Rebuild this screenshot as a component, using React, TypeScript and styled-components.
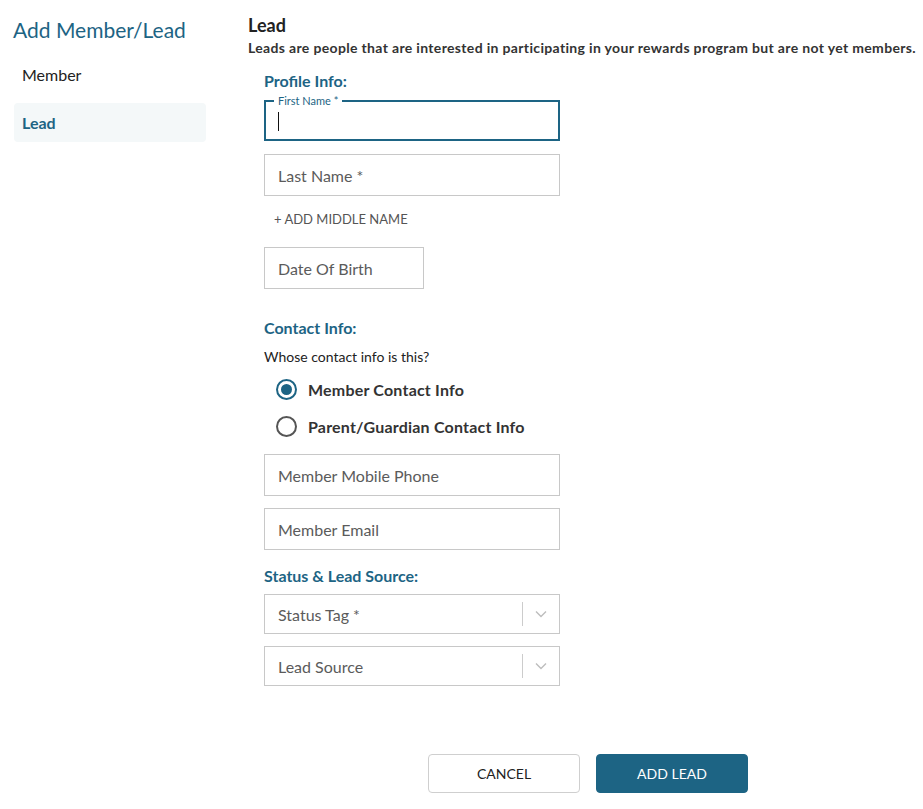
import React from 'react';
import styled, { createGlobalStyle } from 'styled-components';

const TEAL = '#1d6484';

const GlobalStyle = createGlobalStyle`
    body {
        margin: 0;
        background: #ffffff;
        font-family: Lato, 'Liberation Sans', sans-serif;
        color: #222;
    }
    * {
        box-sizing: border-box;
    }
`;

const Page = styled.div`
    display: flex;
    width: 923px;
    min-height: 809px;
`;

/**
 * 왼쪽 메뉴
 */
const Sidebar = styled.nav`
    width: 192px;
    margin-left: 14px;
    padding-top: 17px;
    display: flex;
    flex-direction: column;
`;

const SideTitle = styled.h2`
    margin: 0 0 12px -1px;
    font-size: 21px;
    line-height: 26px;
    font-weight: 400;
    color: ${TEAL};
`;

const SideItem = styled.a<{ $active?: boolean }>`
    display: flex;
    align-items: center;
    height: 39px;
    margin-bottom: 9px;
    padding: 0 8px;
    border-radius: 4px;
    font-size: 16px;
    font-weight: ${(p) => (p.$active ? 700 : 400)};
    color: ${(p) => (p.$active ? TEAL : '#222')};
    background: ${(p) => (p.$active ? '#f4f8f9' : 'transparent')};
    cursor: pointer;
`;

/**
 * 본문
 */
const Main = styled.main`
    flex: 1;
    margin-left: 42px;
    padding-top: 14px;
    display: flex;
    flex-direction: column;
`;

const Title = styled.h1`
    margin: 0;
    font-size: 18px;
    line-height: 22px;
    font-weight: 700;
    color: #222;
`;

const Subtitle = styled.p`
    margin: 3px 0 0;
    font-size: 14px;
    line-height: 18px;
    letter-spacing: 0.34px;
    font-weight: 700;
    color: #333;
    white-space: nowrap;
`;

const Form = styled.form`
    margin-left: 16px;
    width: 296px;
    display: flex;
    flex-direction: column;
`;

const SectionTitle = styled.h3<{ $top: number }>`
    margin: ${(p) => p.$top}px 0 0;
    font-size: 16px;
    line-height: 20px;
    font-weight: 700;
    color: ${TEAL};
`;

const Field = styled.input<{ $width?: number; $top: number }>`
    display: block;
    width: ${(p) => p.$width || 296}px;
    height: 42px;
    margin-top: ${(p) => p.$top}px;
    padding: 0 13px;
    border: 1px solid #c8c8c8;
    border-radius: 0;
    font-family: Lato, 'Liberation Sans', sans-serif;
    font-size: 16px;
    color: #333;
    outline: none;
    &::placeholder {
        color: #5b5b5b;
    }
`;

const FocusedField = styled.div`
    position: relative;
    display: flex;
    align-items: center;
    width: 296px;
    height: 41px;
    margin-top: 9px;
    padding: 0 12px;
    border: 2px solid ${TEAL};
`;

const FloatLabel = styled.span`
    position: absolute;
    top: -8px;
    left: 8px;
    padding: 0 4px;
    background: #fff;
    font-size: 11px;
    line-height: 13px;
    color: ${TEAL};
`;

const Caret = styled.span`
    display: block;
    width: 1px;
    height: 19px;
    margin-top: 2px;
    background: #111;
`;

const AddLink = styled.button`
    align-self: flex-start;
    height: 24px;
    margin: 11px 0 16px 10px;
    padding: 0;
    border: none;
    background: none;
    font-family: Lato, 'Liberation Sans', sans-serif;
    font-size: 13px;
    color: #555;
    cursor: pointer;
`;

const Question = styled.p`
    margin: 9px 0 0;
    font-size: 14px;
    line-height: 20px;
    color: #222;
`;

const RadioRow = styled.label`
    display: flex;
    align-items: center;
    height: 29px;
    margin-top: 8px;
    padding-left: 12px;
    font-size: 16px;
    font-weight: 700;
    letter-spacing: 0.2px;
    color: #333;
    cursor: pointer;
`;

const RadioCircle = styled.span<{ $checked?: boolean }>`
    display: flex;
    align-items: center;
    justify-content: center;
    width: 21px;
    height: 21px;
    margin-right: 11px;
    border-radius: 50%;
    border: 2px solid ${(p) => (p.$checked ? TEAL : '#555')};
    &::after {
        content: '';
        display: ${(p) => (p.$checked ? 'block' : 'none')};
        width: 11px;
        height: 11px;
        border-radius: 50%;
        background: ${TEAL};
    }
`;

const Select = styled.div<{ $top: number }>`
    display: flex;
    align-items: center;
    width: 296px;
    height: 40px;
    margin-top: ${(p) => p.$top}px;
    border: 1px solid #c8c8c8;
    font-size: 16px;
    color: #5b5b5b;
    cursor: pointer;
`;

const SelectValue = styled.span`
    flex: 1;
    padding-left: 13px;
`;

const Divider = styled.span`
    width: 1px;
    height: 24px;
    background: #ccc;
`;

const Chevron = styled.span`
    display: flex;
    align-items: center;
    justify-content: center;
    width: 36px;
`;

const Actions = styled.div`
    display: flex;
    justify-content: center;
    gap: 16px;
    margin-top: 68px;
    padding-left: 5px;
`;

const Button = styled.button<{ $primary?: boolean }>`
    width: 152px;
    height: 39px;
    border-radius: 4px;
    border: 1px solid ${(p) => (p.$primary ? TEAL : '#cfcfcf')};
    background: ${(p) => (p.$primary ? TEAL : '#fff')};
    color: ${(p) => (p.$primary ? '#fff' : '#222')};
    font-family: Lato, 'Liberation Sans', sans-serif;
    font-size: 14px;
    cursor: pointer;
`;

const ChevronIcon = () => (
    <svg width="12" height="8" viewBox="0 0 12 8" fill="none">
        <path d="M1 1.5l5 5 5-5" stroke="#bdbdbd" strokeWidth="1.4" />
    </svg>
);

const SelectBox = ({ label, top }: { label: string; top: number }) => (
    <Select $top={top}>
        <SelectValue>{label}</SelectValue>
        <Divider />
        <Chevron>
            <ChevronIcon />
        </Chevron>
    </Select>
);

const App = () => {
    return (
        <>
            <GlobalStyle />
            <Page>
                <Sidebar>
                    <SideTitle>Add Member/Lead</SideTitle>
                    <SideItem>Member</SideItem>
                    <SideItem $active>Lead</SideItem>
                </Sidebar>
                <Main>
                    <Title>Lead</Title>
                    <Subtitle>
                        Leads are people that are interested in participating in your rewards program but are not yet
                        members.
                    </Subtitle>
                    <Form onSubmit={(e) => e.preventDefault()}>
                        <SectionTitle $top={14}>Profile Info:</SectionTitle>
                        <FocusedField>
                            <FloatLabel>First Name *</FloatLabel>
                            <Caret />
                        </FocusedField>
                        <Field $top={13} placeholder="Last Name *" />
                        <AddLink type="button">+ ADD MIDDLE NAME</AddLink>
                        <Field $top={0} $width={160} placeholder="Date Of Birth" />

                        <SectionTitle $top={29}>Contact Info:</SectionTitle>
                        <Question>Whose contact info is this?</Question>
                        <RadioRow>
                            <RadioCircle $checked />
                            Member Contact Info
                        </RadioRow>
                        <RadioRow>
                            <RadioCircle />
                            Parent/Guardian Contact Info
                        </RadioRow>
                        <Field $top={13} placeholder="Member Mobile Phone" />
                        <Field $top={12} placeholder="Member Email" />

                        <SectionTitle $top={16}>Status &amp; Lead Source:</SectionTitle>
                        <SelectBox label="Status Tag *" top={8} />
                        <SelectBox label="Lead Source" top={12} />
                    </Form>
                    <Actions>
                        <Button type="button">CANCEL</Button>
                        <Button type="button" $primary>
                            ADD LEAD
                        </Button>
                    </Actions>
                </Main>
            </Page>
        </>
    );
};

export default App;
